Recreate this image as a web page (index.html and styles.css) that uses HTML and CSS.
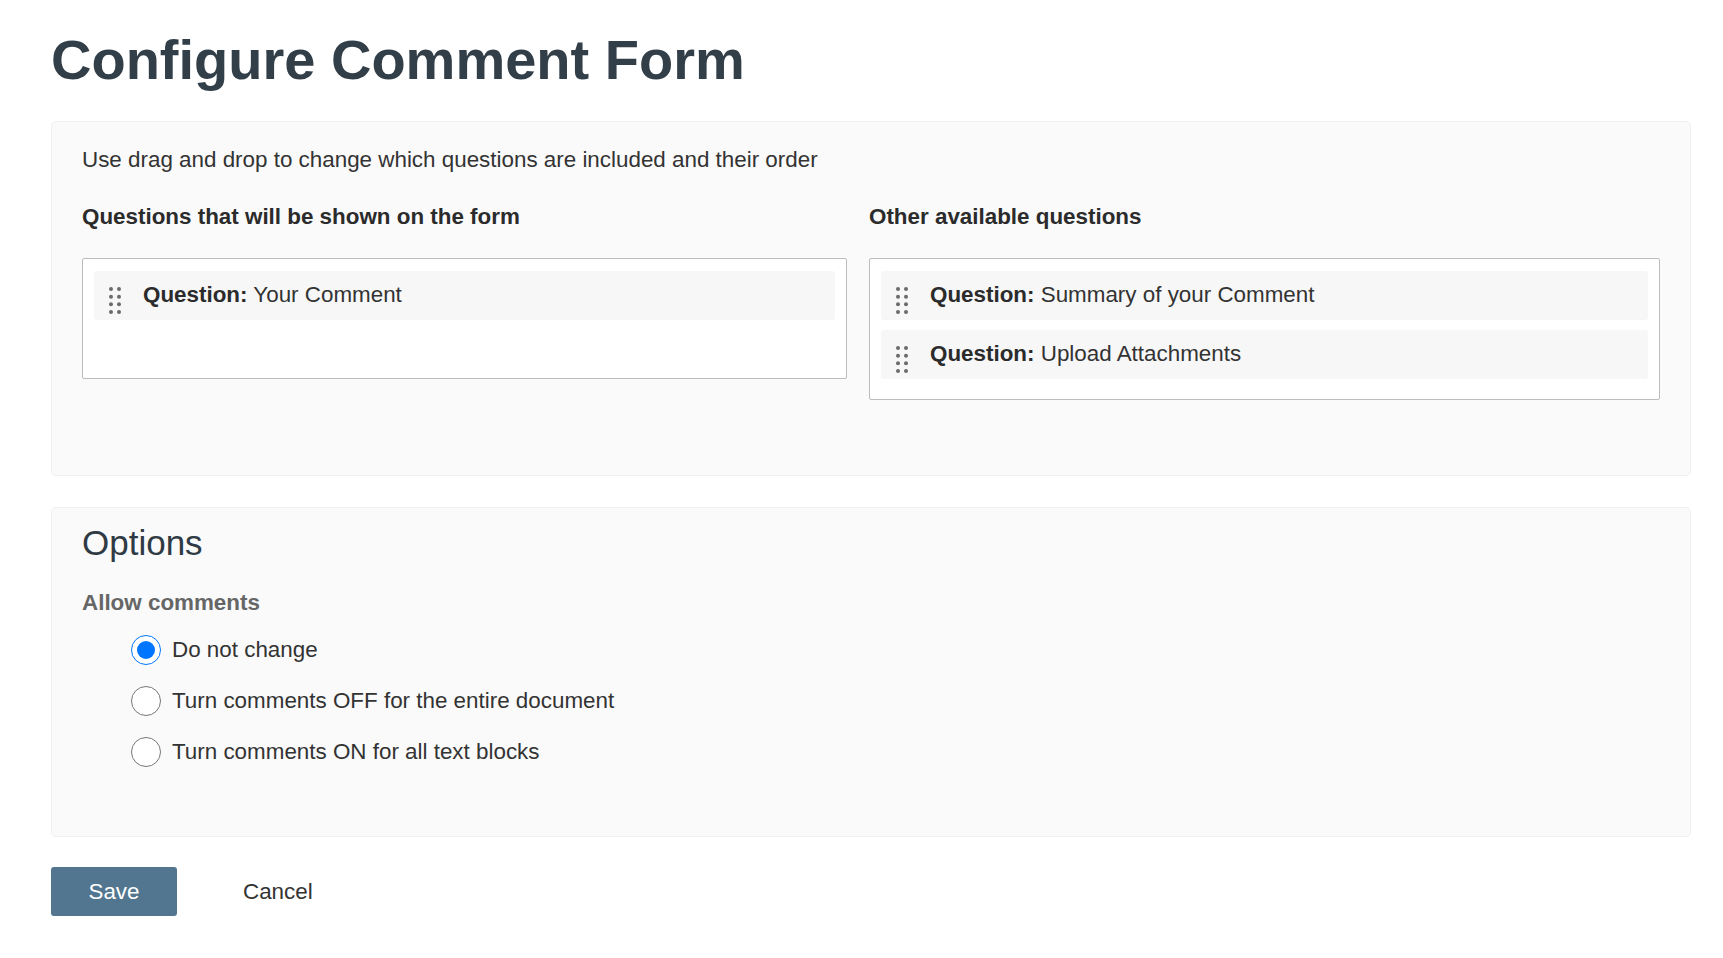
FILE: index.html
```html
<!DOCTYPE html>
<html lang="en">
<head>
<meta charset="utf-8">
<title>Configure Comment Form</title>
<link rel="stylesheet" href="styles.css">
</head>
<body>
<div class="page">
  <h1 class="title">Configure Comment Form</h1>

  <section class="panel panel-questions">
    <p class="intro">Use drag and drop to change which questions are included and their order</p>
    <div class="columns">
      <div class="column column-left">
        <h2 class="col-heading">Questions that will be shown on the form</h2>
        <div class="qbox qbox-shown">
          <div class="qitem">
            <svg class="grip" width="12" height="28" viewBox="0 0 12 28" aria-hidden="true"><g fill="#6b6b6b"><circle cx="2" cy="2" r="2"/><circle cx="10" cy="2" r="2"/><circle cx="2" cy="9.7" r="2"/><circle cx="10" cy="9.7" r="2"/><circle cx="2" cy="17.3" r="2"/><circle cx="10" cy="17.3" r="2"/><circle cx="2" cy="25" r="2"/><circle cx="10" cy="25" r="2"/></g></svg>
            <span class="qtext"><b>Question:</b> Your Comment</span>
          </div>
        </div>
      </div>
      <div class="column column-right">
        <h2 class="col-heading">Other available questions</h2>
        <div class="qbox">
          <div class="qitem">
            <svg class="grip" width="12" height="28" viewBox="0 0 12 28" aria-hidden="true"><g fill="#6b6b6b"><circle cx="2" cy="2" r="2"/><circle cx="10" cy="2" r="2"/><circle cx="2" cy="9.7" r="2"/><circle cx="10" cy="9.7" r="2"/><circle cx="2" cy="17.3" r="2"/><circle cx="10" cy="17.3" r="2"/><circle cx="2" cy="25" r="2"/><circle cx="10" cy="25" r="2"/></g></svg>
            <span class="qtext"><b>Question:</b> Summary of your Comment</span>
          </div>
          <div class="qitem">
            <svg class="grip" width="12" height="28" viewBox="0 0 12 28" aria-hidden="true"><g fill="#6b6b6b"><circle cx="2" cy="2" r="2"/><circle cx="10" cy="2" r="2"/><circle cx="2" cy="9.7" r="2"/><circle cx="10" cy="9.7" r="2"/><circle cx="2" cy="17.3" r="2"/><circle cx="10" cy="17.3" r="2"/><circle cx="2" cy="25" r="2"/><circle cx="10" cy="25" r="2"/></g></svg>
            <span class="qtext"><b>Question:</b> Upload Attachments</span>
          </div>
        </div>
      </div>
    </div>
  </section>

  <section class="panel panel-options">
    <h2 class="options-heading">Options</h2>
    <div class="field-label">Allow comments</div>
    <div class="radios">
      <label class="radio-row"><input type="radio" name="allow" checked><span>Do not change</span></label>
      <label class="radio-row"><input type="radio" name="allow"><span>Turn comments OFF for the entire document</span></label>
      <label class="radio-row"><input type="radio" name="allow"><span>Turn comments ON for all text blocks</span></label>
    </div>
  </section>

  <div class="actions">
    <button class="btn btn-save" type="button">Save</button>
    <button class="btn btn-cancel" type="button">Cancel</button>
  </div>
</div>
</body>
</html>
```

FILE: styles.css
```css
html, body {
  margin: 0;
  padding: 0;
  background: #ffffff;
}

body {
  font-family: "Liberation Sans", Arial, sans-serif;
  font-size: 22.4px;
  line-height: 30px;
  color: #333333;
}

.page {
  padding: 0 32px 40px 51px;
}

.title {
  margin: 29px 0 30px 0;
  font-size: 56px;
  line-height: 62px;
  font-weight: 700;
  color: #323e48;
}

.panel {
  background: #fafafa;
  border: 1px solid #f0f0f0;
  border-radius: 5px;
}

.panel-questions {
  padding: 23px 30px 75px 30px;
}

.intro {
  margin: 0 0 27px 0;
}

.columns {
  display: grid;
  grid-template-columns: 787px 1fr;
}

.column-left {
  padding-right: 22px;
}

.col-heading {
  margin: 0 0 26px 0;
  font-size: 22.4px;
  line-height: 30px;
  font-weight: 700;
  color: #2b2b2b;
}

.qbox {
  background: #ffffff;
  border: 1px solid #bcbcbc;
  border-radius: 2px;
  padding: 12px 11px 10px 11px;
}

.qbox-shown {
  min-height: 121px;
  box-sizing: border-box;
}

.qitem {
  display: flex;
  align-items: flex-start;
  height: 49px;
  box-sizing: border-box;
  padding: 9px 0 0 15px;
  margin-bottom: 10px;
  background: #f7f7f7;
  border-radius: 3px;
}

.grip {
  flex: none;
  margin: 7px 22px 0 0;
}

.qtext b {
  font-weight: 700;
  color: #2b2b2b;
}

.panel-options {
  margin-top: 31px;
  padding: 15px 30px 69px 30px;
}

.options-heading {
  margin: 0;
  font-size: 35px;
  line-height: 40px;
  font-weight: 400;
  color: #2f3a44;
}

.field-label {
  margin-top: 25px;
  font-weight: 700;
  color: #666666;
}

.radios {
  display: flex;
  flex-direction: column;
  gap: 21px;
  margin-top: 17px;
  padding-left: 49px;
}

.radio-row {
  display: flex;
  align-items: center;
  gap: 11px;
  height: 30px;
  cursor: pointer;
}

.radio-row input {
  width: 30px;
  height: 30px;
  margin: 0;
  flex: none;
}

.actions {
  display: flex;
  align-items: center;
  gap: 56px;
  margin-top: 30px;
}

.btn {
  font-family: "Liberation Sans", Arial, sans-serif;
  font-size: 22.4px;
  line-height: 30px;
  height: 49px;
  border-radius: 3px;
  border: none;
  cursor: pointer;
}

.btn-save {
  width: 126px;
  background: #527690;
  color: #ffffff;
}

.btn-cancel {
  background: transparent;
  color: #333333;
  padding: 0 10px;
}
```
